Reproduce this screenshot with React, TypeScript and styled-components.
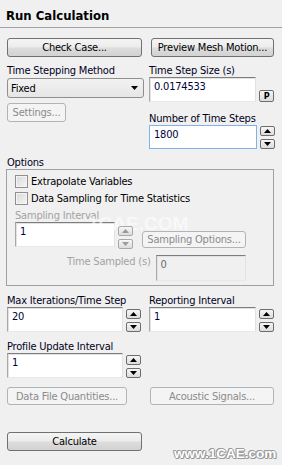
import styled, { createGlobalStyle } from "styled-components";

const GlobalStyle = createGlobalStyle`
  html, body { margin: 0; padding: 0; background: #f0f0f0; }
  body {
    font-family: "DejaVu Sans Condensed", "Liberation Sans", sans-serif;
    font-size: 11px;
    letter-spacing: -0.2px;
    color: #000;
  }
  * { box-sizing: border-box; }
`;

const Panel = styled.div`
  position: relative;
  width: 282px;
  height: 465px;
  overflow: hidden;
  background: #f0f0f0;
`;

const Title = styled.div`
  height: 28px;
  padding: 8px 0 0 6px;
  font-weight: bold;
  font-size: 13px;
  letter-spacing: 0;
  border-bottom: 1px solid #a0a0a0;
`;

const Body = styled.div`
  padding: 10px 8px 0 7px;
`;

const Columns = styled.div<{ $top?: number }>`
  display: grid;
  grid-template-columns: 135px 125px;
  column-gap: 7px;
  margin-top: ${(p) => p.$top ?? 0}px;
`;

const Col = styled.div`
  display: flex;
  flex-direction: column;
  align-items: flex-start;
`;

const Label = styled.div<{ $top?: number; $muted?: boolean }>`
  height: 13px;
  line-height: 13px;
  white-space: nowrap;
  margin-top: ${(p) => p.$top ?? 0}px;
  color: ${(p) => (p.$muted ? "#a2a2a2" : "#00001a")};
`;

const Button = styled.button<{ $w?: number; $h?: number; $ml?: number; $top?: number }>`
  width: ${(p) => (p.$w ? `${p.$w}px` : "100%")};
  height: ${(p) => p.$h ?? 19}px;
  margin-left: ${(p) => p.$ml ?? 0}px;
  margin-top: ${(p) => p.$top ?? 0}px;
  padding: 0;
  border: 1px solid #707070;
  border-radius: 3px;
  background: linear-gradient(#f4f4f4 0%, #ececec 48%, #dddddd 52%, #d2d2d2 100%);
  font: inherit;
  letter-spacing: inherit;
  color: #000;
  white-space: nowrap;

  &:disabled {
    border-color: #b0b4b7;
    background: #f4f4f4;
    color: #8a8a8a;
  }
`;

const Select = styled.div`
  width: 137px;
  height: 20px;
  margin-top: 1px;
  display: flex;
  align-items: center;
  justify-content: space-between;
  padding: 0 5px 0 3px;
  border: 1px solid #8e8f8f;
  border-radius: 3px;
  background: linear-gradient(#f2f2f2, #e6e6e6);
`;

const FieldRow = styled.div<{ $align?: string }>`
  display: flex;
  align-items: ${(p) => p.$align ?? "flex-start"};
  gap: 3px;
`;

const Field = styled.div<{ $w: number; $h?: number; $state?: "focus" | "off" }>`
  width: ${(p) => p.$w}px;
  height: ${(p) => p.$h ?? 25}px;
  padding: 2px 4px;
  line-height: 13px;
  border: 1px solid;
  border-color: ${(p) =>
    p.$state === "focus" ? "#7eb4ea" : "#7d7d7d #dfe3e8 #e3e9ef #a8a8a8"};
  box-shadow: ${(p) => (p.$state === "focus" ? "none" : "inset 1px 1px 0 #e2e2e2")};
  background: ${(p) => (p.$state === "off" ? "#f0f0f0" : "#fff")};
  color: ${(p) => (p.$state === "off" ? "#6d6d6d" : "#00003a")};
`;

const Spin = styled.div<{ $top?: number }>`
  position: relative;
  z-index: 1;
  display: flex;
  flex-direction: column;
  gap: 3px;
  margin-top: ${(p) => p.$top ?? 2}px;
`;

const SpinBtn = styled.div<{ $off?: boolean }>`
  width: 15px;
  height: 10px;
  display: flex;
  align-items: center;
  justify-content: center;
  border: 1px solid ${(p) => (p.$off ? "#a9a9a9" : "#6d6d6d")};
  border-radius: 2px;
  background: linear-gradient(#f6f6f6, #dcdcdc);
  color: ${(p) => (p.$off ? "#9a9a9a" : "#000")};
`;

const PButton = styled(SpinBtn)`
  height: 12px;
  font-size: 9px;
  font-weight: bold;
  line-height: 10px;
`;

const Group = styled.div`
  margin: 0 0 0 -1px;
  height: 117px;
  border: 1px solid #a0a0a0;
  padding: 5px 0 0 8px;
`;

const Check = styled.label`
  display: flex;
  align-items: center;
  gap: 3px;
  height: 13px;
  margin-bottom: 4px;
  white-space: nowrap;
`;

const Box = styled.span`
  width: 13px;
  height: 13px;
  border: 1px solid #8f8f8f;
  background: linear-gradient(135deg, #d8d8d8, #f6f6f6);
  box-shadow: inset 0 0 0 1px #f4f4f4;
`;

const SampleRow = styled.div`
  display: flex;
  align-items: flex-start;
  gap: 3px;
`;

const TimeRow = styled.div`
  display: flex;
  align-items: flex-start;
  gap: 5px;
  margin-top: 6px;
  padding-left: 52px;
`;

const Mark = styled.div`
  position: absolute;
  font-family: "Liberation Sans", sans-serif;
  font-weight: bold;
  letter-spacing: 0;
  pointer-events: none;
  white-space: nowrap;
`;

const MidMark = styled(Mark)`
  left: 88px;
  top: 213px;
  font-size: 19px;
  line-height: 21px;
  color: rgba(255, 255, 255, 0.6);
`;

const CornerMark = styled(Mark)`
  left: 174px;
  top: 446px;
  font-size: 13.5px;
  color: #fff;
  text-shadow: 1px 0 0 #9a9a9a, -1px 0 0 #9a9a9a, 0 1px 0 #9a9a9a, 0 -1px 0 #9a9a9a,
    1px 1px 0 #9a9a9a, -1px -1px 0 #9a9a9a;
`;

const Up = ({ color = "currentColor" }: { color?: string }) => (
  <svg width="7" height="4" viewBox="0 0 7 4">
    <path d="M0 4 L3.5 0 L7 4 Z" fill={color} />
  </svg>
);

const Down = ({ color = "currentColor" }: { color?: string }) => (
  <svg width="7" height="4" viewBox="0 0 7 4">
    <path d="M0 0 L7 0 L3.5 4 Z" fill={color} />
  </svg>
);

const Spinner = ({ off, top }: { off?: boolean; top?: number }) => (
  <Spin $top={top}>
    <SpinBtn $off={off}>
      <Up />
    </SpinBtn>
    <SpinBtn $off={off}>
      <Down />
    </SpinBtn>
  </Spin>
);

export default function App() {
  return (
    <Panel>
      <GlobalStyle />
      <Title>Run Calculation</Title>
      <Body>
        <Columns>
          <Button>Check Case...</Button>
          <Button $w={123} $ml={2}>Preview Mesh Motion...</Button>
        </Columns>

        <Columns $top={7}>
          <Col>
            <Label>Time Stepping Method</Label>
            <Select>
              <span>Fixed</span>
              <Down color="#000" />
            </Select>
            <Button $w={59} $h={19} $top={5} disabled>
              Settings...
            </Button>
          </Col>
          <Col>
            <Label>Time Step Size (s)</Label>
            <FieldRow $align="flex-end">
              <Field $w={107}>0.0174533</Field>
              <PButton>P</PButton>
            </FieldRow>
            <Label $top={10}>Number of Time Steps</Label>
            <FieldRow>
              <Field $w={108} $h={24} $state="focus">1800</Field>
              <Spinner top={1} />
            </FieldRow>
          </Col>
        </Columns>

        <Label $top={7}>Options</Label>
        <Group>
          <Check>
            <Box />
            Extrapolate Variables
          </Check>
          <Check>
            <Box />
            Data Sampling for Time Statistics
          </Check>
          <Label $muted>Sampling Interval</Label>
          <SampleRow>
            <Field $w={100}>1</Field>
            <Spinner off top={4} />
            <Button $w={104} $h={17} $ml={6} $top={9} disabled>
              Sampling Options...
            </Button>
          </SampleRow>
          <TimeRow>
            <Label $muted>Time Sampled (s)</Label>
            <Field $w={90} $h={26} $state="off">0</Field>
          </TimeRow>
        </Group>

        <Columns $top={8}>
          <Col>
            <Label>Max Iterations/Time Step</Label>
            <FieldRow>
              <Field $w={116}>20</Field>
              <Spinner />
            </FieldRow>
          </Col>
          <Col>
            <Label>Reporting Interval</Label>
            <FieldRow>
              <Field $w={107}>1</Field>
              <Spinner />
            </FieldRow>
          </Col>
        </Columns>

        <Label $top={8}>Profile Update Interval</Label>
        <FieldRow>
          <Field $w={116}>1</Field>
          <Spinner />
        </FieldRow>

        <Columns $top={9}>
          <Button $w={120} $h={18} disabled>
            Data File Quantities...
          </Button>
          <Button $w={124} $h={18} $ml={1} disabled>
            Acoustic Signals...
          </Button>
        </Columns>

        <Button $w={135} $top={27}>Calculate</Button>
      </Body>
      <MidMark>1CAE.COM</MidMark>
      <CornerMark>www.1CAE.com</CornerMark>
    </Panel>
  );
}
